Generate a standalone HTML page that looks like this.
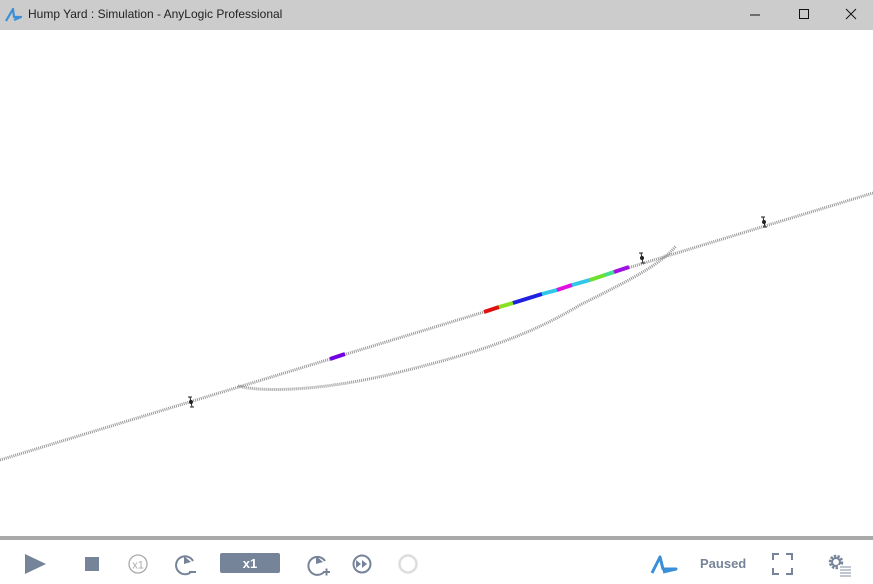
<!DOCTYPE html>
<html><head><style>
body{margin:0;width:873px;height:584px;overflow:hidden;background:#fff;font-family:"Liberation Sans",sans-serif;position:relative}
.tb{position:absolute;left:0;top:0;width:873px;height:30px;background:#ccc;}
.tt{position:absolute;left:28px;top:7px;font-size:12px;color:#222}
.bar{position:absolute;left:0;top:536px;width:873px;height:4px;background:#a9a9a9}
</style></head><body>
<div class="tb">
<svg style="position:absolute;left:5px;top:7px" width="18" height="16" viewBox="0 0 18 16"><path d="M1 14 L8 2 L9 10 L16 10 L9 13" fill="none" stroke="#3a8fd6" stroke-width="2.2" stroke-linejoin="round"/></svg>
<div class="tt">Hump Yard : Simulation - AnyLogic Professional</div>
<svg style="position:absolute;left:750px;top:8px" width="110" height="14"><line x1="0" y1="7" x2="10" y2="7" stroke="#111"/><rect x="49.5" y="1.5" width="9" height="9" fill="none" stroke="#111"/><path d="M96 1 L106 11 M106 1 L96 11" stroke="#111"/></svg>
</div>
<svg style="position:absolute;left:0;top:30px" width="873" height="506" viewBox="0 30 873 506">
<g fill="none" stroke="#999" stroke-width="3" stroke-dasharray="1 1">
<line x1="0" y1="460" x2="873" y2="193"/>
<path d="M238 386 C260 392 320 392 400 372 C480 352 530 335 580 305 C630 280 660 265 676 246"/>
</g>
<g stroke-width="4">
<line x1="330" y1="359" x2="345" y2="354" stroke="#7000e0"/>
<line x1="484" y1="312" x2="499" y2="307" stroke="#e01010"/>
<line x1="499" y1="307" x2="513" y2="303" stroke="#88e020"/>
<line x1="513" y1="303" x2="542" y2="294" stroke="#2020e0"/>
<line x1="542" y1="294" x2="557" y2="290" stroke="#30c8e8"/>
<line x1="557" y1="290" x2="572" y2="285" stroke="#e010e0"/>
<line x1="572" y1="285" x2="590" y2="280" stroke="#30c8e8"/>
<line x1="590" y1="280" x2="605" y2="275" stroke="#70e030"/>
<line x1="605" y1="275" x2="614" y2="272" stroke="#40e090"/>
<line x1="614" y1="272" x2="629" y2="267" stroke="#a010e0"/>
</g>
<g stroke="#222" stroke-width="1">
<path d="M190 397 L192 407 M188 397 L192 397 M190 407 L194 407"/><circle cx="191" cy="402" r="1.5" fill="#222"/>
<path d="M641 253 L643 263 M639 253 L643 253 M641 263 L645 263"/><circle cx="642" cy="258" r="1.5" fill="#222"/>
<path d="M763 217 L765 227 M761 217 L765 217 M763 227 L767 227"/><circle cx="764" cy="222" r="1.5" fill="#222"/>
</g>
</svg>
<div class="bar"></div>
<svg style="position:absolute;left:0;top:540px" width="873" height="44">
<path d="M25 14 L46 24 L25 34 Z" fill="#768499"/>
<rect x="85" y="17" width="14" height="14" fill="#768499"/>
<circle cx="138" cy="24" r="9" fill="none" stroke="#aaa" stroke-width="1.3"/><text x="138" y="28.5" font-size="11" fill="#aaa" text-anchor="middle" font-family="Liberation Sans">x1</text>
<path d="M191 32 A9 9 0 1 1 193 21" fill="none" stroke="#768499" stroke-width="2"/><path d="M184 16 L184 24 L191 22 Z" fill="#768499"/><line x1="189" y1="32" x2="196" y2="32" stroke="#768499" stroke-width="2"/>
<rect x="220" y="13" width="60" height="20" rx="2" fill="#768499"/><text x="250" y="28" font-size="13" font-weight="bold" fill="#fff" text-anchor="middle" font-family="Liberation Sans">x1</text>
<path d="M324 32 A9 9 0 1 1 325 21" fill="none" stroke="#768499" stroke-width="2"/><path d="M316 16 L316 24 L323 22 Z" fill="#768499"/><path d="M323 32 L330 32 M326.5 28.5 L326.5 35.5" stroke="#768499" stroke-width="2"/>
<circle cx="362" cy="24" r="8.5" fill="none" stroke="#768499" stroke-width="2"/><path d="M356 20 L361 24 L356 28 Z M362 20 L367 24 L362 28 Z" fill="#768499"/>
<circle cx="408" cy="24" r="8.5" fill="none" stroke="#ddd" stroke-width="2.5"/>
<path d="M652 33 L660 17 L663 29 L676 29 L663 32" fill="none" stroke="#3a8fd6" stroke-width="3" stroke-linejoin="round"/>
<text x="700" y="28" font-size="13" font-weight="bold" fill="#768499" font-family="Liberation Sans">Paused</text>
<path d="M773 20 L773 14 L779 14 M786 14 L792 14 L792 20 M792 28 L792 34 L786 34 M779 34 L773 34 L773 28" fill="none" stroke="#768499" stroke-width="2"/>
<circle cx="836" cy="22" r="6" fill="none" stroke="#768499" stroke-width="2.5" stroke-dasharray="2.4 1.3"/>
<circle cx="836" cy="22" r="4" fill="none" stroke="#768499" stroke-width="2"/>
<rect x="838" y="25" width="14" height="13" fill="#fff"/>
<path d="M840 27 L851 27 M840 30 L851 30 M840 33 L851 33 M840 36 L851 36" stroke="#aab4c0" stroke-width="1.5"/>
</svg>
</body></html>
